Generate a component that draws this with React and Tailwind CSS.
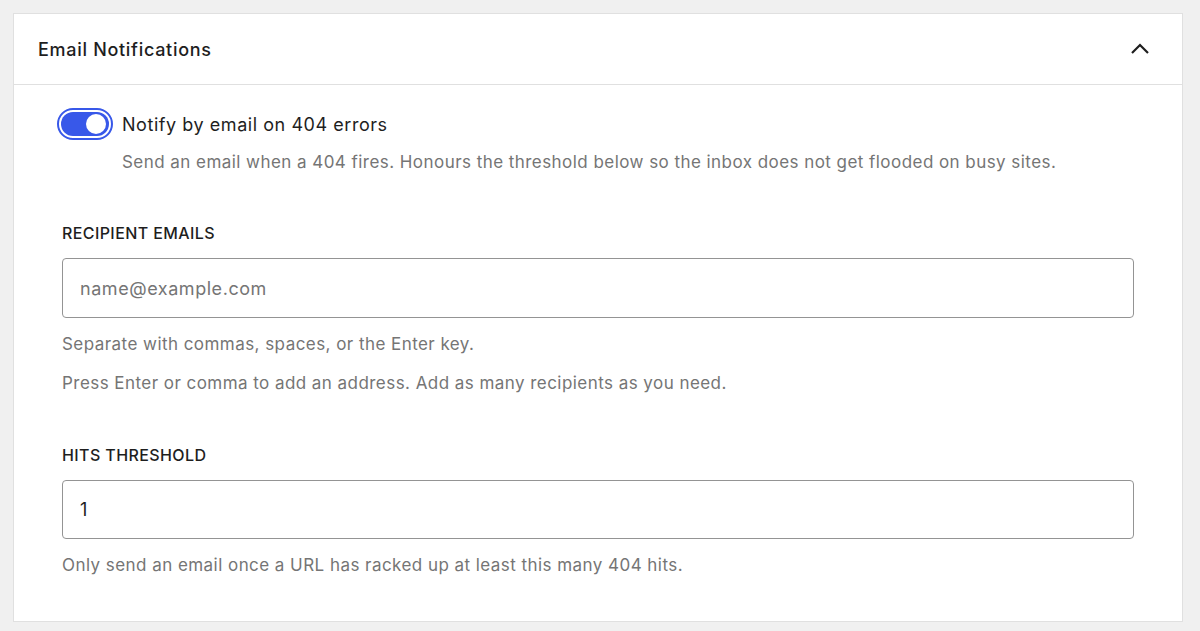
import { useState } from "react";

function Toggle({ checked, onChange }) {
    return (
        <button
            type="button"
            role="switch"
            aria-checked={checked}
            onClick={() => onChange(!checked)}
            className="flex h-[32px] w-[56px] shrink-0 items-center rounded-full border-2 border-[#3858e9] bg-white p-[2px]"
        >
            <span className="flex h-full w-full items-center justify-end rounded-full bg-[#3858e9] px-[3px]">
                <span className="h-[20px] w-[20px] rounded-full bg-white" />
            </span>
        </button>
    );
}

function Field({ label, children, help }) {
    return (
        <div>
            <label className="block text-[16px] font-medium uppercase leading-[20px] tracking-[0.4px] text-[#1e1e1e]">
                {label}
            </label>
            <div className="mt-[15px]">{children}</div>
            {help}
        </div>
    );
}

const helpText = "text-[17px] leading-[24px] tracking-[0.45px] text-[#757575]";

export default function App() {
    const [enabled, setEnabled] = useState(true);
    const [emails, setEmails] = useState("");
    const [threshold, setThreshold] = useState("1");

    return (
        <div
            className="min-h-[631px] bg-[#f0f0f0] pl-[13px] pr-[17px] pt-[13px]"
            style={{ fontFamily: "Inter, 'Noto Sans', sans-serif" }}
        >
            <div className="h-[609px] border border-[#e0e0e0] bg-white">
                <div className="flex h-[71px] items-center justify-between border-b border-[#e0e0e0] pl-[24px] pr-[32px]">
                    <h2 className="text-[18px] font-medium tracking-[0.7px] text-[#1e1e1e]">Email Notifications</h2>
                    <svg width="20" height="20" viewBox="0 0 20 20" fill="none" className="text-[#1e1e1e]">
                        <path d="M2 14 10 6l8 8" stroke="currentColor" strokeWidth="2.2" />
                    </svg>
                </div>

                <div className="pl-[48px] pr-[48px] pt-[23px]">
                    <div className="flex items-center gap-[9px]">
                        <div className="-ml-[5px]">
                            <Toggle checked={enabled} onChange={setEnabled} />
                        </div>
                        <span className="text-[18px] tracking-[0.55px] text-[#1e1e1e]">Notify by email on 404 errors</span>
                    </div>
                    <p className={`mt-[10px] pl-[60px] ${helpText}`}>
                        Send an email when a 404 fires. Honours the threshold below so the inbox does not get flooded on busy sites.
                    </p>

                    <div className="mt-[49px]">
                        <Field
                            label="Recipient Emails"
                            help={
                                <>
                                    <p className={`mt-[14px] ${helpText}`}>
                                        Separate with commas, spaces, or the Enter key.
                                    </p>
                                    <p className={`mt-[15px] ${helpText}`}>
                                        Press Enter or comma to add an address. Add as many recipients as you need.
                                    </p>
                                </>
                            }
                        >
                            <input
                                type="text"
                                value={emails}
                                onChange={(e) => setEmails(e.target.value)}
                                placeholder="name@example.com"
                                className="h-[60px] w-full rounded-[4px] border border-[#949494] px-[17px] text-[18px] tracking-[0.55px] text-[#1e1e1e] outline-none placeholder:text-[#757575]"
                            />
                        </Field>
                    </div>

                    <div className="mt-[50px]">
                        <Field
                            label="Hits Threshold"
                            help={
                                <p className={`mt-[14px] ${helpText}`}>
                                    Only send an email once a URL has racked up at least this many 404 hits.
                                </p>
                            }
                        >
                            <input
                                type="number"
                                min="1"
                                value={threshold}
                                onChange={(e) => setThreshold(e.target.value)}
                                className="h-[59px] w-full rounded-[4px] border border-[#949494] px-[17px] text-[18px] text-[#1e1e1e] outline-none [appearance:textfield]"
                            />
                        </Field>
                    </div>
                </div>
            </div>
        </div>
    );
}
